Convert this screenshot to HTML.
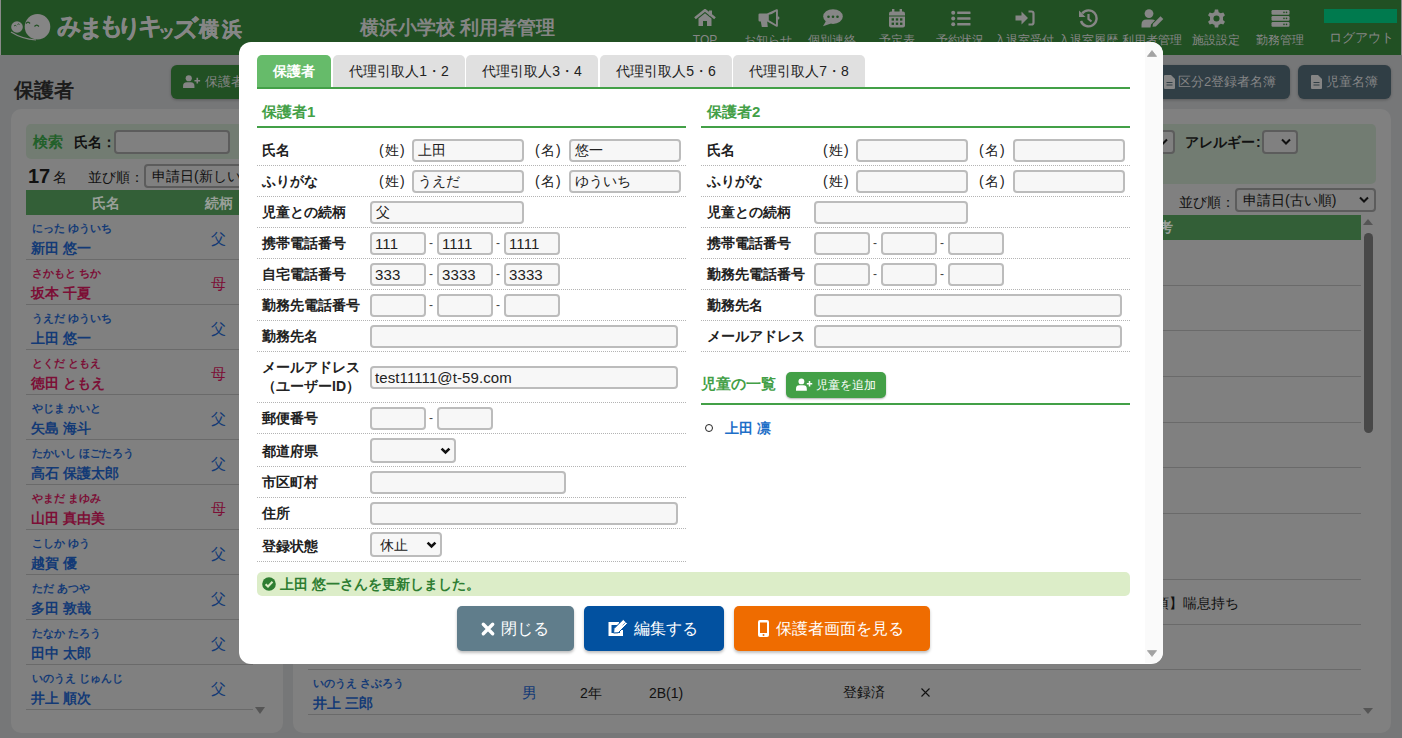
<!DOCTYPE html>
<html lang="ja"><head><meta charset="utf-8">
<style>
*{box-sizing:border-box;margin:0;padding:0}
html,body{width:1402px;height:738px;overflow:hidden}
body{font-family:"Liberation Sans",sans-serif;font-size:14px;color:#222;background:#767778;position:relative}
.a{position:absolute;white-space:nowrap}
#hdr{left:0;top:0;width:1402px;height:55px;background:#215023;border-left:1px solid #8a8a8a;border-right:1px solid #8a8a8a}
.nav{position:absolute;top:0;width:64px;height:54px;text-align:center;color:#868686;font-size:13px;line-height:14px}
.nav svg{position:absolute;left:50%;top:9px;transform:translateX(-50%)}
.nav span{position:absolute;left:-20px;right:-20px;top:33px;text-align:center}
.lg{position:absolute;line-height:30px;font-weight:bold;color:#868686;-webkit-text-stroke:0.4px #868686}
.card{position:absolute;background:#808080;border-radius:10px}
.bgbtn{position:absolute;border-radius:6px;color:#858585;font-size:13px;line-height:33px;box-shadow:0 1px 3px rgba(0,0,0,.25)}
.rl{position:absolute;height:1px;background:#6a6a6a}
.kana{position:absolute;font-size:10.7px;font-weight:bold;line-height:12px}
.nm{position:absolute;font-size:14px;font-weight:bold;line-height:17px}
.b{color:#133a76}.r{color:#7c0f36}
.rel{position:absolute;font-size:15px;line-height:17px}
.bsel{position:absolute;border:2px solid #5c5c5c;border-radius:4px;background:#808080;color:#111;font-size:14px;line-height:21px;padding-left:6px}
/* modal */
#modal{left:239px;top:42px;width:924px;height:621px;background:#fff;border-radius:12px;overflow:hidden}
.tab{position:absolute;top:13px;height:32px;background:#e0e0e0;border-radius:5px 5px 0 0;text-align:center;line-height:32px;font-size:14px;color:#222}
.tab.on{background:#66bb6a;color:#fff;font-weight:bold}
.h2{position:absolute;color:#43a047;font-weight:bold;font-size:15px;line-height:20px}
.gl{position:absolute;height:2px;background:#43a047}
.dl{position:absolute;height:0;border-top:1px dotted #b4b4b4}
.lb{position:absolute;font-weight:bold;font-size:14px;line-height:18px;color:#222}
.inp{position:absolute;height:23px;border:2px solid #bcbcbc;border-radius:4px;background:#f7f7f7;font-size:14px;line-height:19px;padding-left:4px;color:#222}
.lat{font-size:15px;position:relative;top:0;left:-1px;letter-spacing:0.1px}
.pr{position:absolute;font-size:14px;line-height:18px;color:#222;letter-spacing:1.2px;margin-left:1px}
.hy{position:absolute;font-size:12px;line-height:14px;color:#444}
.sel svg{position:absolute;right:6px;top:7px}
.btn{position:absolute;top:564px;height:45px;border-radius:5px;color:#fff;font-size:16px;line-height:45px;box-shadow:0 2px 3px rgba(0,0,0,.25)}
.btn svg{position:absolute;overflow:visible}
.btn span{position:absolute;top:0}
</style></head><body>
<div id="hdr" class="a"></div>
<!-- logo -->
<svg class="a" style="left:10px;top:12px" width="48" height="32" viewBox="0 0 48 32">
 <circle cx="7" cy="15" r="5.8" fill="#858585"/>
 <circle cx="27.5" cy="14.8" r="12.8" fill="#858585"/>
 <path d="M1 20 Q12 27 26 28" stroke="#858585" stroke-width="1.2" fill="none"/>
 <path d="M16 11.5 q2 -2.6 4 0 M24.5 14.5 q2.2 -2.8 4.4 0" stroke="#215023" stroke-width="1.3" fill="none"/><path d="M4 14 q1.2 -1.4 2.4 0 M7.5 12.5 q1 -1.2 2 0" stroke="#215023" stroke-width=".9" fill="none"/>
</svg>
<div class="a" style="left:0;top:0;width:260px;height:54px"><span class="lg" style="left:57px;top:11px;font-size:24px">み</span><span class="lg" style="left:79px;top:13px;font-size:24px">ま</span><span class="lg" style="left:99px;top:11px;font-size:24px">も</span><span class="lg" style="left:117px;top:13px;font-size:24px">り</span><span class="lg" style="left:138px;top:11px;font-size:24px">キ</span><span class="lg" style="left:158px;top:17px;font-size:17px">ッ</span><span class="lg" style="left:173px;top:13px;font-size:25px">ズ</span><span class="lg" style="left:199px;top:14px;font-size:20px">横</span><span class="lg" style="left:222px;top:14px;font-size:20px">浜</span></div>
<div class="a" style="left:360px;top:16px;font-size:19px;line-height:24px;font-weight:bold;color:#858585">横浜小学校 利用者管理</div>
<!-- nav icons -->
<svg class="a" style="left:694px;top:9px" width="22" height="18" viewBox="0 0 22 18" fill="#868686">
 <path d="M1 9.2 L11 1.2 L21 9.2" stroke="#868686" stroke-width="2.6" fill="none" stroke-linejoin="miter"/>
 <rect x="15" y="1.5" width="3" height="5"/>
 <path d="M4.5 9.5 L11 4.3 L17.5 9.5 V17 H13 V12 H9 V17 H4.5 Z"/>
</svg>
<svg class="a" style="left:758px;top:9px" width="22" height="19" viewBox="0 0 22 19" fill="#868686">
 <path fill-rule="evenodd" d="M0.5 5.6 Q0.5 4.4 1.7 4.4 H9 L18.4 0.3 Q19.9 -0.3 19.9 1.3 V16.7 Q19.9 18.3 18.4 17.7 L9.2 12.4 L9.8 18 H3.8 L2.8 12.4 H1.7 Q0.5 12.4 0.5 11.2 Z M10.8 5.8 Q14.5 5 18 2.4 V15.6 Q14.5 13 10.8 11.2 Z"/>
 <rect x="19.5" y="7.6" width="1.8" height="3" rx=".8"/>
</svg>
<svg class="a" style="left:822px;top:9px" width="21" height="18" viewBox="0 0 21 18">
 <ellipse cx="11" cy="7.6" rx="9.8" ry="7.4" fill="#868686"/>
 <path d="M4 12 L1 17.3 L9 14.5 Z" fill="#868686"/>
 <circle cx="6.5" cy="7.8" r="1.3" fill="#215023"/><circle cx="11" cy="7.8" r="1.3" fill="#215023"/><circle cx="15.5" cy="7.8" r="1.3" fill="#215023"/>
</svg>
<svg class="a" style="left:888px;top:9px" width="18" height="19" viewBox="0 0 18 19" fill="#868686">
 <rect x="4" y="0" width="2.4" height="4"/><rect x="11.6" y="0" width="2.4" height="4"/>
 <path d="M1 4.5 Q1 2.5 3 2.5 H15 Q17 2.5 17 4.5 V6.5 H1 Z"/>
 <path d="M1 7.6 H17 V16.5 Q17 18.5 15 18.5 H3 Q1 18.5 1 16.5 Z"/>
 <g fill="#215023"><rect x="3.6" y="9.3" width="2.4" height="2.3"/><rect x="7.8" y="9.3" width="2.4" height="2.3"/><rect x="12" y="9.3" width="2.4" height="2.3"/>
 <rect x="3.6" y="13.6" width="2.4" height="2.3"/><rect x="7.8" y="13.6" width="2.4" height="2.3"/><rect x="12" y="13.6" width="2.4" height="2.3"/></g>
</svg>
<svg class="a" style="left:951px;top:10px" width="20" height="17" viewBox="0 0 20 17" fill="#868686">
 <circle cx="2.2" cy="2.8" r="2"/><circle cx="2.2" cy="8.5" r="2"/><circle cx="2.2" cy="14.2" r="2"/>
 <rect x="6.2" y="1.5" width="13.3" height="2.6" rx=".5"/><rect x="6.2" y="7.2" width="13.3" height="2.6" rx=".5"/><rect x="6.2" y="12.9" width="13.3" height="2.6" rx=".5"/>
</svg>
<svg class="a" style="left:1015px;top:10px" width="20" height="16" viewBox="0 0 20 16" fill="#868686">
 <path d="M0.5 5.5 H6.5 V1.5 L13 8 L6.5 14.5 V10.5 H0.5 Z"/>
 <path d="M13.5 1.5 H16.5 Q18.5 1.5 18.5 3.5 V12.5 Q18.5 14.5 16.5 14.5 H13.5" fill="none" stroke="#868686" stroke-width="2.2"/>
</svg>
<svg class="a" style="left:1078px;top:9px" width="20" height="19" viewBox="0 0 20 19">
 <path d="M4.2 4.5 A8 8 0 1 1 3 12" fill="none" stroke="#868686" stroke-width="2.4"/>
 <path d="M1 1.5 L1 8 L7.5 8 Z" fill="#868686"/>
 <path d="M10.5 5 V10 L13.5 12.5" fill="none" stroke="#868686" stroke-width="2.2"/>
</svg>
<svg class="a" style="left:1141px;top:9px" width="24" height="19" viewBox="0 0 24 19" fill="#868686">
 <circle cx="8" cy="4.6" r="4.4"/>
 <path d="M0.5 18.5 V15.5 Q0.5 10.5 5.5 10.5 H11 Q13 10.5 14 11.3 L10 15.5 L9.5 18.5 Z"/>
 <path d="M11.5 17.8 L12 14.8 L19.5 7.3 L22.3 10.1 L14.8 17.6 Z"/>
</svg>
<svg class="a" style="left:1207px;top:9px" width="19" height="19" viewBox="0 0 20 20">
 <path fill="#868686" fill-rule="evenodd" d="M8.3 0.5 H11.7 L12.3 3.3 Q13.5 3.8 14.5 4.6 L17.2 3.6 L18.9 6.6 L16.8 8.5 Q17 10 16.8 11.5 L18.9 13.4 L17.2 16.4 L14.5 15.4 Q13.5 16.2 12.3 16.7 L11.7 19.5 H8.3 L7.7 16.7 Q6.5 16.2 5.5 15.4 L2.8 16.4 L1.1 13.4 L3.2 11.5 Q3 10 3.2 8.5 L1.1 6.6 L2.8 3.6 L5.5 4.6 Q6.5 3.8 7.7 3.3 Z M10 6.8 A3.2 3.2 0 1 0 10 13.2 A3.2 3.2 0 1 0 10 6.8 Z"/>
</svg>
<svg class="a" style="left:1271px;top:10px" width="19" height="17" viewBox="0 0 19 17">
 <rect x="0.5" y="0" width="18" height="4.8" rx="1.2" fill="#868686"/>
 <rect x="0.5" y="6" width="18" height="4.8" rx="1.2" fill="#868686"/>
 <rect x="0.5" y="12" width="18" height="4.8" rx="1.2" fill="#868686"/>
 <g fill="#215023"><circle cx="13" cy="2.4" r=".8"/><circle cx="15.5" cy="2.4" r=".8"/><circle cx="13" cy="8.4" r=".8"/><circle cx="15.5" cy="8.4" r=".8"/><circle cx="13" cy="14.4" r=".8"/><circle cx="15.5" cy="14.4" r=".8"/></g>
</svg>
<div class="a" style="left:1324px;top:9px;width:73px;height:14px;background:#007a4e"></div>
<!-- nav labels -->
<div class="a" style="top:33px;left:0;width:1402px;height:21px;font-size:12px;line-height:14px;color:#868686">
 <span class="a" style="left:690px;width:30px;text-align:center">TOP</span>
 <span class="a" style="left:736px;width:64px;text-align:center">お知らせ</span>
 <span class="a" style="left:800px;width:64px;text-align:center">個別連絡</span>
 <span class="a" style="left:865px;width:64px;text-align:center">予定表</span>
 <span class="a" style="left:928px;width:64px;text-align:center">予約状況</span>
 <span class="a" style="left:992px;width:64px;text-align:center">入退室受付</span>
 <span class="a" style="left:1056px;width:64px;text-align:center">入退室履歴</span>
 <span class="a" style="left:1120px;width:64px;text-align:center">利用者管理</span>
 <span class="a" style="left:1184px;width:64px;text-align:center">施設設定</span>
 <span class="a" style="left:1248px;width:64px;text-align:center">勤務管理</span>
 <span class="a" style="left:1325px;width:72px;text-align:center;top:-2px;font-size:13px">ログアウト</span>
</div>
<!-- background page -->
<div class="a" style="left:14px;top:76px;font-size:20px;line-height:28px;font-weight:bold;color:#1c1c1c">保護者</div>
<div class="bgbtn" style="left:171px;top:65px;width:120px;height:34px;background:#215023">
 <svg class="a" style="left:12px;top:10px" width="18" height="13" viewBox="0 0 22 16" fill="#858585"><circle cx="7" cy="4" r="3.8"/><path d="M0 16 V13.5 Q0 9 4.5 9 H9.5 Q14 9 14 13.5 V16 Z"/><path d="M16.5 3.5 h2 v2.5 h2.5 v2 h-2.5 v2.5 h-2 v-2.5 h-2.5 v-2 h2.5 Z"/></svg>
 <span class="a" style="left:34px;top:0">保護者を追加</span>
</div>
<div class="bgbtn" style="left:1150px;top:65px;width:140px;height:34px;background:#303e45">
 <svg class="a" style="left:14px;top:10px" width="11" height="14" viewBox="0 0 11 14" fill="#858585"><path d="M0 1 Q0 0 1 0 H7 L11 4 V13 Q11 14 10 14 H1 Q0 14 0 13 Z"/><rect x="2.5" y="7" width="6" height="1" fill="#303e45"/><rect x="2.5" y="9.5" width="6" height="1" fill="#303e45"/></svg>
 <span class="a" style="left:28px;top:0">区分2登録者名簿</span>
</div>
<div class="bgbtn" style="left:1298px;top:65px;width:93px;height:34px;background:#303e45">
 <svg class="a" style="left:13px;top:10px" width="11" height="14" viewBox="0 0 11 14" fill="#858585"><path d="M0 1 Q0 0 1 0 H7 L11 4 V13 Q11 14 10 14 H1 Q0 14 0 13 Z"/><rect x="2.5" y="7" width="6" height="1" fill="#303e45"/><rect x="2.5" y="9.5" width="6" height="1" fill="#303e45"/></svg>
 <span class="a" style="left:28px;top:0">児童名簿</span>
</div>

<div class="card" style="left:11px;top:109px;width:272px;height:624px">
 <div class="a" style="left:15px;top:15px;width:240px;height:35px;background:#727c72;border-radius:5px"></div>
 <div class="a" style="left:22px;top:23px;font-size:15px;line-height:20px;font-weight:bold;color:#22602a">検索</div>
 <div class="a" style="left:63px;top:23px;font-size:14px;line-height:20px;font-weight:bold;color:#111">氏名：</div>
 <div class="bsel" style="left:103px;top:21px;width:116px;height:24px"></div>
 <div class="a" style="left:17px;top:55px;font-size:20px;line-height:24px;font-weight:bold;color:#111">17<span style="font-size:14px;font-weight:normal;margin-left:3px;position:relative;top:-1px">名</span></div>
 <div class="a" style="left:77px;top:58px;font-size:14px;line-height:20px;color:#111">並び順：</div>
 <div class="bsel" style="left:133px;top:55px;width:140px;height:24px">申請日(新しい順)</div>
 <div class="a" style="left:15px;top:81px;width:257px;height:25px;background:#335f37"></div>
 <div class="a" style="left:81px;top:85px;font-size:14px;line-height:18px;font-weight:bold;color:#999f99">氏名</div>
 <div class="a" style="left:194px;top:85px;font-size:14px;line-height:18px;font-weight:bold;color:#999f99">続柄</div>
</div>
<div class="kana b" style="left:32px;top:222px">にった ゆういち</div>
<div class="nm b" style="left:31px;top:240px">新田 悠一</div>
<div class="rel b" style="left:211px;top:230px">父</div>
<div class="rl" style="left:26px;top:259px;width:227px"></div>
<div class="kana r" style="left:32px;top:267px">さかもと ちか</div>
<div class="nm r" style="left:31px;top:285px">坂本 千夏</div>
<div class="rel r" style="left:211px;top:275px">母</div>
<div class="rl" style="left:26px;top:304px;width:227px"></div>
<div class="kana b" style="left:32px;top:312px">うえだ ゆういち</div>
<div class="nm b" style="left:31px;top:330px">上田 悠一</div>
<div class="rel b" style="left:211px;top:320px">父</div>
<div class="rl" style="left:26px;top:349px;width:227px"></div>
<div class="kana r" style="left:32px;top:357px">とくだ ともえ</div>
<div class="nm r" style="left:31px;top:375px">徳田 ともえ</div>
<div class="rel r" style="left:211px;top:365px">母</div>
<div class="rl" style="left:26px;top:394px;width:227px"></div>
<div class="kana b" style="left:32px;top:402px">やじま かいと</div>
<div class="nm b" style="left:31px;top:420px">矢島 海斗</div>
<div class="rel b" style="left:211px;top:410px">父</div>
<div class="rl" style="left:26px;top:439px;width:227px"></div>
<div class="kana b" style="left:32px;top:447px">たかいし ほごたろう</div>
<div class="nm b" style="left:31px;top:465px">高石 保護太郎</div>
<div class="rel b" style="left:211px;top:455px">父</div>
<div class="rl" style="left:26px;top:484px;width:227px"></div>
<div class="kana r" style="left:32px;top:492px">やまだ まゆみ</div>
<div class="nm r" style="left:31px;top:510px">山田 真由美</div>
<div class="rel r" style="left:211px;top:500px">母</div>
<div class="rl" style="left:26px;top:529px;width:227px"></div>
<div class="kana b" style="left:32px;top:537px">こしか ゆう</div>
<div class="nm b" style="left:31px;top:555px">越賀 優</div>
<div class="rel b" style="left:211px;top:545px">父</div>
<div class="rl" style="left:26px;top:574px;width:227px"></div>
<div class="kana b" style="left:32px;top:582px">ただ あつや</div>
<div class="nm b" style="left:31px;top:600px">多田 敦哉</div>
<div class="rel b" style="left:211px;top:590px">父</div>
<div class="rl" style="left:26px;top:619px;width:227px"></div>
<div class="kana b" style="left:32px;top:627px">たなか たろう</div>
<div class="nm b" style="left:31px;top:645px">田中 太郎</div>
<div class="rel b" style="left:211px;top:635px">父</div>
<div class="rl" style="left:26px;top:664px;width:227px"></div>
<div class="kana b" style="left:32px;top:672px">いのうえ じゅんじ</div>
<div class="nm b" style="left:31px;top:690px">井上 順次</div>
<div class="rel b" style="left:211px;top:680px">父</div>
<div class="rl" style="left:26px;top:709px;width:227px"></div>
<svg class="a" style="left:255px;top:707px" width="10" height="8" viewBox="0 0 10 8"><path d="M0 0 H10 L5 7 Z" fill="#555"/></svg>
<div class="card" style="left:293px;top:109px;width:1098px;height:624px">
 <div class="a" style="left:15px;top:15px;width:1068px;height:60px;background:#727c72;border-radius:5px"></div>
 <div class="bsel" style="left:840px;top:21px;width:42px;height:24px"><svg class="a" style="right:5px;top:6px" width="10" height="8" viewBox="0 0 10 8"><path d="M1 1.5 L5 5.5 L9 1.5" stroke="#111" stroke-width="2" fill="none"/></svg></div>
 <div class="a" style="left:892px;top:23px;font-size:14px;line-height:20px;font-weight:bold;color:#111">アレルギー<span style="margin-left:1px">:</span></div>
 <div class="bsel" style="left:969px;top:21px;width:36px;height:24px"><svg class="a" style="right:5px;top:6px" width="10" height="8" viewBox="0 0 10 8"><path d="M1 1.5 L5 5.5 L9 1.5" stroke="#111" stroke-width="2" fill="none"/></svg></div>
 <div class="a" style="left:886px;top:83px;font-size:14px;line-height:20px;color:#111">並び順：</div>
 <div class="bsel" style="left:942px;top:79px;width:141px;height:24px">申請日(古い順)<svg class="a" style="right:5px;top:6px" width="10" height="8" viewBox="0 0 10 8"><path d="M1 1.5 L5 5.5 L9 1.5" stroke="#111" stroke-width="2" fill="none"/></svg></div>
 <div class="a" style="left:15px;top:106px;width:1053px;height:25px;background:#335f37"></div>
 <div class="a" style="left:852px;top:109px;font-size:14px;line-height:18px;font-weight:bold;color:#999f99">備考</div>
 <div class="a" style="left:1070px;top:110px;width:0;height:0;border-left:5px solid transparent;border-right:5px solid transparent;border-bottom:6px solid #555"></div>
 <div class="a" style="left:1071px;top:124px;width:9px;height:200px;background:#484848;border-radius:5px"></div>
 <div class="a" style="left:1070px;top:599px;width:0;height:0;border-left:5px solid transparent;border-right:5px solid transparent;border-top:6px solid #555"></div>
 <div class="a" style="left:806px;top:485px;font-size:14px;line-height:18px;color:#111">【注意事項】喘息持ち</div>
 <div class="kana b" style="left:20px;top:568px">いのうえ さぶろう</div>
 <div class="nm b" style="left:20px;top:586px">井上 三郎</div>
 <div class="a b" style="left:229px;top:575px;font-size:15px;line-height:18px">男</div>
 <div class="a" style="left:287px;top:575px;font-size:14px;line-height:18px;color:#111">2年</div>
 <div class="a" style="left:356px;top:575px;font-size:14px;line-height:18px;color:#111">2B(1)</div>
 <div class="a" style="left:550px;top:574px;font-size:14px;line-height:18px;color:#111">登録済</div>
 <svg class="a" style="left:628px;top:579px" width="9" height="9" viewBox="0 0 9 9"><path d="M0.5 0.5 L8.5 8.5 M8.5 0.5 L0.5 8.5" stroke="#111" stroke-width="1.1"/></svg>
<div class="rl" style="left:15px;top:176px;width:1053px"></div>
<div class="rl" style="left:15px;top:221px;width:1053px"></div>
<div class="rl" style="left:15px;top:267px;width:1053px"></div>
<div class="rl" style="left:15px;top:313px;width:1053px"></div>
<div class="rl" style="left:15px;top:358px;width:1053px"></div>
<div class="rl" style="left:15px;top:404px;width:1053px"></div>
<div class="rl" style="left:15px;top:470px;width:1053px"></div>
<div class="rl" style="left:15px;top:515px;width:1053px"></div>
<div class="rl" style="left:15px;top:560px;width:1053px"></div>
<div class="rl" style="left:15px;top:605px;width:1053px"></div>
</div>
<div id="modal" class="a" style="height:622px">
 <div class="tab on" style="left:18px;width:74px">保護者</div>
 <div class="tab" style="left:94px;width:132px">代理引取人1・2</div>
 <div class="tab" style="left:227px;width:132px">代理引取人3・4</div>
 <div class="tab" style="left:361px;width:132px">代理引取人5・6</div>
 <div class="tab" style="left:494px;width:132px">代理引取人7・8</div>
 <div class="gl" style="left:18px;top:45px;width:873px"></div>
 <div class="a" style="left:906px;top:0;width:18px;height:621px;background:#fafafa"></div>
 <svg class="a" style="left:908px;top:8px" width="10" height="7" viewBox="0 0 10 7"><path d="M5 0.6 L9.6 6.4 H0.4 Z" fill="#a3a3a3" stroke="#a3a3a3" stroke-width=".8" stroke-linejoin="round"/></svg>
 <svg class="a" style="left:908px;top:608px" width="10" height="7" viewBox="0 0 10 7"><path d="M5 6.4 L9.6 0.6 H0.4 Z" fill="#a3a3a3" stroke="#a3a3a3" stroke-width=".8" stroke-linejoin="round"/></svg>
 <div class="h2" style="left:23px;top:60px">保護者1</div>
 <div class="gl" style="left:18px;top:84px;width:429px"></div>
 <div class="dl" style="left:18px;top:123px;width:429px"></div>
 <div class="dl" style="left:18px;top:154px;width:429px"></div>
 <div class="dl" style="left:18px;top:185px;width:429px"></div>
 <div class="dl" style="left:18px;top:216px;width:429px"></div>
 <div class="dl" style="left:18px;top:247px;width:429px"></div>
 <div class="dl" style="left:18px;top:278px;width:429px"></div>
 <div class="dl" style="left:18px;top:309px;width:429px"></div>
 <div class="dl" style="left:18px;top:360px;width:429px"></div>
 <div class="dl" style="left:18px;top:391px;width:429px"></div>
 <div class="dl" style="left:18px;top:424px;width:429px"></div>
 <div class="dl" style="left:18px;top:455px;width:429px"></div>
 <div class="dl" style="left:18px;top:486px;width:429px"></div>
 <div class="dl" style="left:18px;top:519px;width:429px"></div>
 <div class="lb" style="left:23px;top:99px">氏名</div>
 <div class="pr" style="left:139px;top:99px">(姓)</div>
 <div class="inp" style="left:173px;top:97px;width:112px;height:23px">上田</div>
 <div class="pr" style="left:295px;top:99px">(名)</div>
 <div class="inp" style="left:330px;top:97px;width:112px;height:23px">悠一</div>
 <div class="lb" style="left:23px;top:130px">ふりがな</div>
 <div class="pr" style="left:139px;top:130px">(姓)</div>
 <div class="inp" style="left:173px;top:128px;width:112px;height:23px">うえだ</div>
 <div class="pr" style="left:295px;top:130px">(名)</div>
 <div class="inp" style="left:330px;top:128px;width:112px;height:23px">ゆういち</div>
 <div class="lb" style="left:23px;top:161px">児童との続柄</div>
 <div class="inp" style="left:131px;top:159px;width:154px;height:23px">父</div>
 <div class="lb" style="left:23px;top:192px">携帯電話番号</div>
 <div class="inp" style="left:131px;top:190px;width:56px;height:23px"><span class="lat">111</span></div>
 <div class="inp" style="left:198px;top:190px;width:56px;height:23px"><span class="lat">1111</span></div>
 <div class="inp" style="left:265px;top:190px;width:56px;height:23px"><span class="lat">1111</span></div>
 <div class="hy" style="left:190px;top:194px">-</div>
 <div class="hy" style="left:257px;top:194px">-</div>
 <div class="lb" style="left:23px;top:223px">自宅電話番号</div>
 <div class="inp" style="left:131px;top:221px;width:56px;height:23px"><span class="lat">333</span></div>
 <div class="inp" style="left:198px;top:221px;width:56px;height:23px"><span class="lat">3333</span></div>
 <div class="inp" style="left:265px;top:221px;width:56px;height:23px"><span class="lat">3333</span></div>
 <div class="hy" style="left:190px;top:225px">-</div>
 <div class="hy" style="left:257px;top:225px">-</div>
 <div class="lb" style="left:23px;top:254px">勤務先電話番号</div>
 <div class="inp" style="left:131px;top:252px;width:56px;height:23px"></div>
 <div class="inp" style="left:198px;top:252px;width:56px;height:23px"></div>
 <div class="inp" style="left:265px;top:252px;width:56px;height:23px"></div>
 <div class="hy" style="left:190px;top:256px">-</div>
 <div class="hy" style="left:257px;top:256px">-</div>
 <div class="lb" style="left:23px;top:285px">勤務先名</div>
 <div class="inp" style="left:131px;top:283px;width:308px;height:23px"></div>
 <div class="lb" style="left:23px;top:316px;line-height:19px">メールアドレス<br>（ユーザーID）</div>
 <div class="inp" style="left:131px;top:324px;width:308px;height:23px"><span class="lat">test11111@t-59.com</span></div>
 <div class="lb" style="left:23px;top:367px">郵便番号</div>
 <div class="inp" style="left:131px;top:365px;width:56px;height:23px"></div>
 <div class="inp" style="left:198px;top:365px;width:56px;height:23px"></div>
 <div class="hy" style="left:190px;top:369px">-</div>
 <div class="lb" style="left:23px;top:400px">都道府県</div>
 <div class="inp" style="left:131px;top:396px;width:86px;height:25px"><svg style="position:absolute;right:3px;top:7px" width="11" height="8" viewBox="0 0 11 8"><path d="M1.6 1.6 L5.5 5.5 L9.4 1.6" stroke="#111" stroke-width="2.6" fill="none"/></svg></div>
 <div class="lb" style="left:23px;top:431px">市区町村</div>
 <div class="inp" style="left:131px;top:429px;width:196px;height:23px"></div>
 <div class="lb" style="left:23px;top:462px">住所</div>
 <div class="inp" style="left:131px;top:460px;width:308px;height:23px"></div>
 <div class="lb" style="left:23px;top:495px">登録状態</div>
 <div class="inp" style="left:131px;top:490px;width:72px;height:25px"><span style="padding-left:4px;position:relative;top:2px">休止</span><svg style="position:absolute;right:3px;top:7px" width="11" height="8" viewBox="0 0 11 8"><path d="M1.6 1.6 L5.5 5.5 L9.4 1.6" stroke="#111" stroke-width="2.6" fill="none"/></svg></div>
 <div class="h2" style="left:468px;top:60px">保護者2</div>
 <div class="gl" style="left:462px;top:84px;width:429px"></div>
 <div class="dl" style="left:462px;top:123px;width:429px"></div>
 <div class="dl" style="left:462px;top:154px;width:429px"></div>
 <div class="dl" style="left:462px;top:185px;width:429px"></div>
 <div class="dl" style="left:462px;top:216px;width:429px"></div>
 <div class="dl" style="left:462px;top:247px;width:429px"></div>
 <div class="dl" style="left:462px;top:278px;width:429px"></div>
 <div class="dl" style="left:462px;top:309px;width:429px"></div>
 <div class="lb" style="left:468px;top:99px">氏名</div>
 <div class="pr" style="left:583px;top:99px">(姓)</div>
 <div class="inp" style="left:617px;top:97px;width:112px;height:23px"></div>
 <div class="pr" style="left:739px;top:99px">(名)</div>
 <div class="inp" style="left:774px;top:97px;width:112px;height:23px"></div>
 <div class="lb" style="left:468px;top:130px">ふりがな</div>
 <div class="pr" style="left:583px;top:130px">(姓)</div>
 <div class="inp" style="left:617px;top:128px;width:112px;height:23px"></div>
 <div class="pr" style="left:739px;top:130px">(名)</div>
 <div class="inp" style="left:774px;top:128px;width:112px;height:23px"></div>
 <div class="lb" style="left:468px;top:161px">児童との続柄</div>
 <div class="inp" style="left:575px;top:159px;width:154px;height:23px"></div>
 <div class="lb" style="left:468px;top:192px">携帯電話番号</div>
 <div class="inp" style="left:575px;top:190px;width:56px;height:23px"></div>
 <div class="inp" style="left:642px;top:190px;width:56px;height:23px"></div>
 <div class="inp" style="left:709px;top:190px;width:56px;height:23px"></div>
 <div class="hy" style="left:634px;top:194px">-</div>
 <div class="hy" style="left:701px;top:194px">-</div>
 <div class="lb" style="left:468px;top:223px">勤務先電話番号</div>
 <div class="inp" style="left:575px;top:221px;width:56px;height:23px"></div>
 <div class="inp" style="left:642px;top:221px;width:56px;height:23px"></div>
 <div class="inp" style="left:709px;top:221px;width:56px;height:23px"></div>
 <div class="hy" style="left:634px;top:225px">-</div>
 <div class="hy" style="left:701px;top:225px">-</div>
 <div class="lb" style="left:468px;top:254px">勤務先名</div>
 <div class="inp" style="left:575px;top:252px;width:308px;height:23px"></div>
 <div class="lb" style="left:468px;top:285px">メールアドレス</div>
 <div class="inp" style="left:575px;top:283px;width:308px;height:23px"></div>
 <div class="h2" style="left:462px;top:332px;font-size:15px">児童の一覧</div>
 <div class="a" style="left:547px;top:330px;width:100px;height:26px;background:#43a047;border-radius:5px;box-shadow:0 1px 2px rgba(0,0,0,.3);color:#fff;font-size:12px;line-height:26px">
  <svg class="a" style="left:10px;top:6px" width="17" height="13" viewBox="0 0 22 16" fill="#fff"><circle cx="7" cy="4" r="3.8"/><path d="M0 16 V13.5 Q0 9 4.5 9 H9.5 Q14 9 14 13.5 V16 Z"/><path d="M16.5 3.5 h2 v2.5 h2.5 v2 h-2.5 v2.5 h-2 v-2.5 h-2.5 v-2 h2.5 Z"/></svg>
  <span class="a" style="left:30px;top:0">児童を追加</span></div>
 <div class="gl" style="left:462px;top:361px;width:429px"></div>
 <div class="a" style="left:466px;top:382px;width:8px;height:8px;border:1.6px solid #222;border-radius:50%"></div>
 <div class="a" style="left:486px;top:377px;font-size:14px;line-height:18px;font-weight:bold;color:#1e6fc8">上田 凛</div>
 <div class="a" style="left:18px;top:530px;width:873px;height:24px;background:#dcedc8;border-radius:5px">
  <svg class="a" style="left:5px;top:5px" width="14" height="14" viewBox="0 0 14 14"><circle cx="7" cy="7" r="6.8" fill="#2e7d32"/><path d="M3.6 7.2 L6 9.5 L10.5 4.8" stroke="#dcedc8" stroke-width="2" fill="none"/></svg>
  <span class="a" style="left:23px;top:3px;font-size:14px;line-height:18px;font-weight:bold;color:#2e7d32">上田 悠一さんを更新しました。</span></div>
 <div class="btn" style="left:218px;width:117px;background:#607d8b">
  <svg style="left:24px;top:16px" width="14" height="14" viewBox="0 0 14 14"><path d="M2.3 2.3 L11.7 11.7 M11.7 2.3 L2.3 11.7" stroke="#fff" stroke-width="3.4" stroke-linecap="round"/></svg>
  <span style="left:44px">閉じる</span></div>
 <div class="btn" style="left:345px;width:140px;background:#0251a0">
  <svg style="left:24px;top:14px" width="21" height="17" viewBox="0 0 21 17"><path d="M11 3.5 H2 V14.5 H13.5 V10" stroke="#fff" stroke-width="3" fill="none"/><path d="M5.6 13 L6 8.6 L15.2 -0.6 L19.4 3.6 L10.2 12.8 Z" fill="#fff" stroke="#0251a0" stroke-width="1"/><path d="M14.6 5.4 L17.6 2.4" stroke="#0251a0" stroke-width="0.6"/></svg>
  <span style="left:50px">編集する</span></div>
 <div class="btn" style="left:495px;width:196px;background:#ef6c00">
  <svg style="left:24px;top:14px" width="11" height="17" viewBox="0 0 11 17" fill="#fff"><path fill-rule="evenodd" d="M2 0 H9 Q11 0 11 2 V15 Q11 17 9 17 H2 Q0 17 0 15 V2 Q0 0 2 0 Z M2 2.5 V13 H9 V2.5 Z"/><circle cx="5.5" cy="15" r="1" fill="#ef6c00"/></svg>
  <span style="left:42px">保護者画面を見る</span></div>
</div>
</body></html>
